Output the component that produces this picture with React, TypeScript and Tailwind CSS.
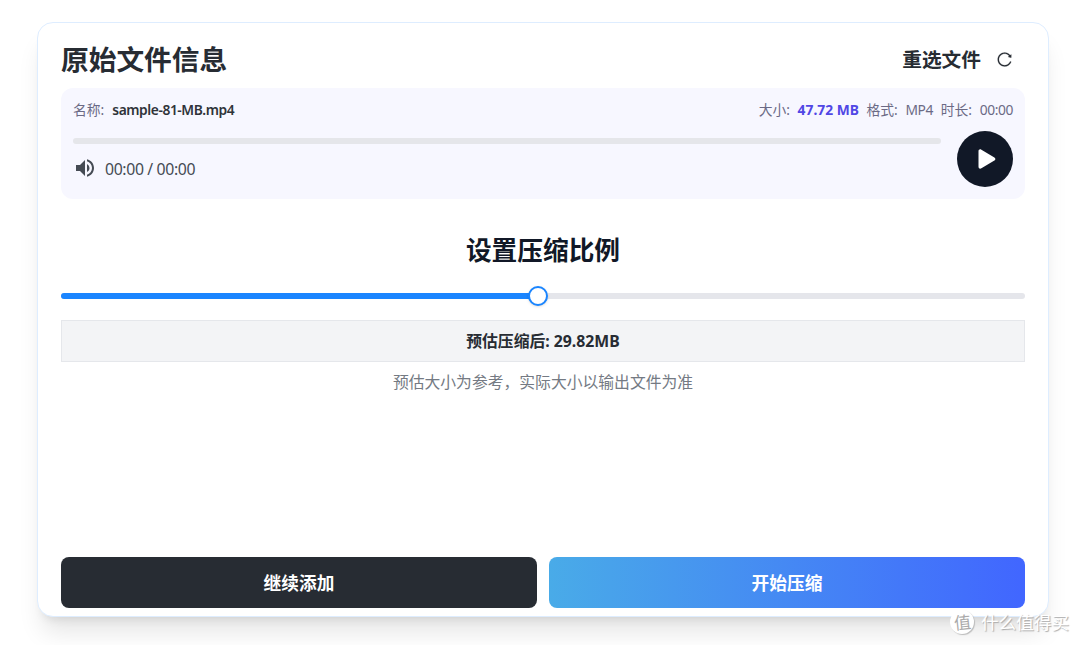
import React, { useState } from 'react';

function RefreshIcon() {
  return (
    <svg viewBox="0 0 1024 1024" className="-mt-px -ml-px size-[17px]" fill="currentColor" stroke="currentColor" strokeWidth="10">
      <path d="M909.1 209.300l-56.400 44.100C775.800 155.100 656.200 92 521.900 92 290 92 102.300 279.500 102 511.500 101.700 743.700 289.800 932 521.900 932c181.300 0 335.800-115 394.600-276.100 1.500-4.200-.7-8.900-4.900-10.300l-56.700-19.500a8 8 0 0 0-10.100 4.800c-1.800 5-3.800 10-5.900 14.900-17.300 41-42.100 77.800-73.700 109.400A344.770 344.770 0 0 1 655.900 829c-42.300 17.900-87.400 27-133.800 27-46.500 0-91.500-9.100-133.800-27A341.500 341.500 0 0 1 279 755.200a342.160 342.160 0 0 1-73.700-109.400c-17.900-42.400-27-87.400-27-133.900s9.100-91.500 27-133.900c17.300-41 42.100-77.800 73.700-109.400 31.600-31.600 68.400-56.400 109.300-73.800 42.300-17.900 87.400-27 133.800-27 46.500 0 91.500 9.100 133.800 27a341.500 341.500 0 0 1 109.300 73.800c9.900 9.900 19.200 20.400 27.800 31.400l-60.200 47a8 8 0 0 0 3 14.100l175.600 43c5 1.200 9.900-2.600 9.900-7.700l.8-180.900c-.1-6.600-7.800-10.300-13-6.200z" />
    </svg>
  );
}

function VolumeIcon() {
  return (
    <svg viewBox="0 0 24 24" className="size-6" fill="currentColor">
      <path d="M3 9v6h4l5 5V4L7 9H3zm13.500 3A4.500 4.500 0 0 0 14 7.970v8.050c1.480-.73 2.500-2.250 2.500-4.020zM14 3.230v2.060c2.890.86 5 3.540 5 6.710s-2.110 5.850-5 6.710v2.060c4.010-.91 7-4.490 7-8.770s-2.990-7.860-7-8.770z" />
    </svg>
  );
}

function FileInfo() {
  return (
    <div className="h-[111px] rounded-xl bg-[#f7f7ff] px-3 pt-3">
      <div className="flex h-5 items-center justify-between text-[13.800px] text-[#6b6a85]">
        <div className="flex gap-2">
          <span>名称:</span>
          <span className="font-semibold tracking-[-0.43px] text-[#2f3339]">sample-81-MB.mp4</span>
        </div>
        <div className="flex gap-[7.700px]">
          <span>大小:</span>
          <span className="font-bold text-[#5147e5]">47.72 MB</span>
          <span>格式:</span>
          <span className="tracking-[-0.4px]">MP4</span>
          <span>时长:</span>
          <span className="tracking-[-0.4px]">00:00</span>
        </div>
      </div>
      <div className="mt-[11.400px] flex gap-4">
        <div className="flex-1 pt-[7px]">
          <div className="h-[6px] rounded-full bg-[#e5e6ea]" />
          <div className="mt-[11px] flex items-center gap-2 text-[#454b54]">
            <VolumeIcon />
            <span className="pt-[2px] text-[15.800px] leading-6 tracking-[-0.36px]">00:00 / 00:00</span>
          </div>
        </div>
        <button className="flex size-[56px] items-center justify-center rounded-full bg-[#111827] text-white">
          <svg viewBox="0 0 20 22" className="ml-1 h-[22px] w-5" fill="currentColor">
            <path d="M1.500 3.300C1.500 1.600 3 .9 4.400 1.700l13 7.700c1.300.8 1.300 2.400 0 3.200l-13 7.700c-1.400.8-2.900.1-2.900-1.600z" />
          </svg>
        </button>
      </div>
    </div>
  );
}

function RatioSlider({ value }: { value: number }) {
  return (
    <div className="relative mt-6 h-[6px] rounded-full bg-[#e5e6eb]">
      <div className="h-full rounded-full bg-[#1a85ff]" style={{ width: `${value}%` }} />
      <div
        className="absolute -top-[7px] size-5 -translate-x-1/2 rounded-full border-2 border-[#1a85ff] bg-white shadow-sm"
        style={{ left: `${value}%` }}
      />
    </div>
  );
}

function Watermark() {
  return (
    <div className="absolute top-[610px] left-[950px] flex items-center gap-[7px] whitespace-nowrap text-white">
      <span className="flex size-6 items-center justify-center rounded-full bg-white text-[17px] leading-none text-[#aaa] shadow-[1px_1px_1px_#bbb]">
        <span className="-rotate-6">值</span>
      </span>
      <span className="text-[17.600px] leading-6 [text-shadow:1px_1px_1px_#aaa]">什么值得买</span>
    </div>
  );
}

export default function App() {
  const [ratio] = useState(49.500);

  return (
    <div className="relative h-[645px] w-[1080px] overflow-hidden bg-white pt-[22px] pl-[37px] font-['Noto_Sans','Noto_Sans_CJK_SC',sans-serif]">
      <main className="flex h-[595px] w-[1012px] flex-col rounded-2xl border border-[#deedff] bg-white px-[23px] pb-2 shadow-xl">
        <header className="flex h-[65px] items-center justify-between pt-[9px] pr-3">
          <h1 className="-mt-[2px] text-[27.700px] leading-9 font-bold text-[#272c33]">原始文件信息</h1>
          <button className="flex items-center gap-4 text-[19.700px] leading-7 font-bold text-[#272c33]">
            重选文件
            <RefreshIcon />
          </button>
        </header>
        <FileInfo />
        <h2 className="mt-[34px] text-center text-[25.700px] leading-9 font-bold text-[#111827]">
          设置压缩比例
        </h2>
        <RatioSlider value={ratio} />
        <div className="mt-[21px] flex h-[42px] items-center justify-center border border-[#e5e7eb] bg-[#f3f4f6] pt-[2px] text-[15.800px] font-bold text-[#272c33]">
          预估压缩后: 29.82MB
        </div>
        <p className="mt-2 text-center text-[15.800px] leading-6 text-[#747a83]">
          预估大小为参考，实际大小以输出文件为准
        </p>
        <footer className="mt-auto grid grid-cols-2 gap-3 text-[17.700px] font-bold text-white">
          <button className="h-[51px] rounded-lg bg-[#272c33] pt-[2px]">继续添加</button>
          <button className="h-[51px] rounded-lg bg-linear-to-r/srgb from-[#49abe8] to-[#4166ff] pt-[2px]">开始压缩</button>
        </footer>
      </main>
      <Watermark />
    </div>
  );
}
